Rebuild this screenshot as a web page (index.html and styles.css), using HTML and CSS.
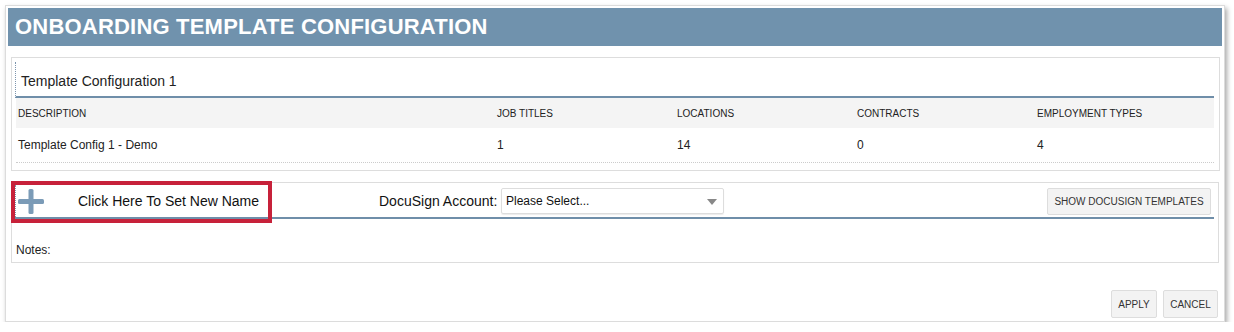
FILE: index.html
```html
<!DOCTYPE html>
<html>
<head>
<meta charset="utf-8">
<link rel="stylesheet" href="styles.css">
</head>
<body>
<div class="window">
  <div class="header">ONBOARDING TEMPLATE CONFIGURATION</div>

  <div class="panel config">
    <div class="config-title">Template Configuration 1</div>
    <div class="grid head">
      <div class="cell">DESCRIPTION</div>
      <div class="cell">JOB TITLES</div>
      <div class="cell">LOCATIONS</div>
      <div class="cell">CONTRACTS</div>
      <div class="cell">EMPLOYMENT TYPES</div>
    </div>
    <div class="grid row">
      <div class="cell">Template Config 1 - Demo</div>
      <div class="cell">1</div>
      <div class="cell">14</div>
      <div class="cell">0</div>
      <div class="cell">4</div>
    </div>
  </div>

  <div class="panel docusign">
    <div class="toolbar">
      <div class="name-btn">
        <svg class="plus" width="26" height="25" viewBox="0 0 26 25">
          <rect x="0" y="10" width="26" height="5" rx="1.5" fill="#7b9bb7"/>
          <rect x="10.5" y="0" width="5" height="25" rx="1.5" fill="#7b9bb7"/>
        </svg>
        <span class="name-text">Click Here To Set New Name</span>
      </div>
      <span class="ds-label">DocuSign Account:</span>
      <div class="select">
        <span>Please Select...</span>
        <span class="arrow"></span>
      </div>
      <button class="btn show-btn">SHOW DOCUSIGN TEMPLATES</button>
    </div>
    <div class="notes">Notes:</div>
  </div>

  <div class="footer">
    <button class="btn apply">APPLY</button>
    <button class="btn cancel">CANCEL</button>
  </div>
</div>
</body>
</html>
```

FILE: styles.css
```css
html, body {
  margin: 0;
  padding: 0;
  background: #ffffff;
}

body {
  font-family: "Liberation Sans", Arial, sans-serif;
  color: #222;
}

.window {
  margin: 5px 0 0 5px;
  width: 1220px;
  height: 317px;
  box-sizing: border-box;
  border: 1px solid #dcdcdc;
  box-shadow: 2px 3px 5px rgba(0, 0, 0, 0.35);
  padding: 2px;
  display: flex;
  flex-direction: column;
  background: #fff;
}

.header {
  height: 38px;
  flex: none;
  background: #7092ad;
  color: #fff;
  font-weight: bold;
  font-size: 22px;
  letter-spacing: 0.2px;
  padding-left: 7px;
  display: flex;
  align-items: center;
}

.panel {
  border: 1px solid #dddddd;
  flex: none;
}

.config {
  margin: 11px 2px 0 3px;
  padding: 4px 5px 7px 3px;
}

.config-title {
  height: 34px;
  box-sizing: border-box;
  padding-top: 3px;
  border-left: 1px dotted #7d95ad;
  border-bottom: 2px solid #6f8ea9;
  padding-left: 5px;
  font-size: 14px;
  display: flex;
  align-items: center;
  height: 36px;
}

.grid {
  display: grid;
  grid-template-columns: 479px repeat(4, 180px);
  margin-left: 1px;
}

.grid .cell {
  padding-left: 2px;
  display: flex;
  align-items: center;
}

.head {
  height: 30px;
  background: #f4f4f4;
  font-size: 10px;
  color: #222;
}

.row {
  height: 34px;
  border-bottom: 1px dotted #cccccc;
  font-size: 12px;
}

.docusign {
  margin: 11px 3px 0 3px;
  padding: 0 4px 0 2px;
}

.toolbar {
  display: flex;
  align-items: center;
  padding-top: 2px;
  height: 32px;
  border-bottom: 2px solid #6f8ea9;
}

.name-btn {
  position: relative;
  margin-left: 1px;
  width: 253px;
  height: 32px;
  flex: none;
  box-sizing: border-box;
  border-left: 1px dotted #7d95ad;
  display: flex;
  align-items: center;
  padding-left: 2px;
}

.name-btn::after {
  content: "";
  position: absolute;
  left: -5px;
  right: -4px;
  top: -4px;
  bottom: -6px;
  border: 4px solid #c7213a;
  pointer-events: none;
}

.plus {
  display: block;
  flex: none;
}

.name-text {
  margin-left: 34px;
  font-size: 14px;
  color: #111;
}

.ds-label {
  margin-left: 111px;
  font-size: 14px;
  color: #111;
  width: 119px;
  flex: none;
}

.select {
  margin-left: 3px;
  width: 223px;
  height: 26px;
  box-sizing: border-box;
  border: 1px solid #dddddd;
  border-radius: 2px;
  box-shadow: 0 1px 1px rgba(0, 0, 0, 0.08);
  display: flex;
  align-items: center;
  justify-content: space-between;
  padding: 0 6px 0 4px;
  font-size: 12px;
  color: #111;
}

.arrow {
  width: 0;
  height: 0;
  border-left: 5px solid transparent;
  border-right: 5px solid transparent;
  border-top: 6px solid #888;
  margin-top: 2px;
}

.btn {
  font-family: "Liberation Sans", Arial, sans-serif;
  font-size: 10px;
  color: #333;
  background: #f3f3f3;
  border: 1px solid #dddddd;
  border-radius: 2px;
  padding: 0;
  box-sizing: border-box;
}

.show-btn {
  margin-left: auto;
  margin-right: 3px;
  width: 164px;
  height: 27px;
}

.notes {
  padding: 24px 0 5px 2px;
  font-size: 12px;
  line-height: 14px;
  color: #222;
}

.footer {
  margin-top: auto;
  display: flex;
  justify-content: flex-end;
  gap: 6px;
  padding-right: 4px;
  margin-bottom: 1px;
}

.apply {
  width: 46px;
  height: 28px;
}

.cancel {
  width: 55px;
  height: 28px;
}
```
